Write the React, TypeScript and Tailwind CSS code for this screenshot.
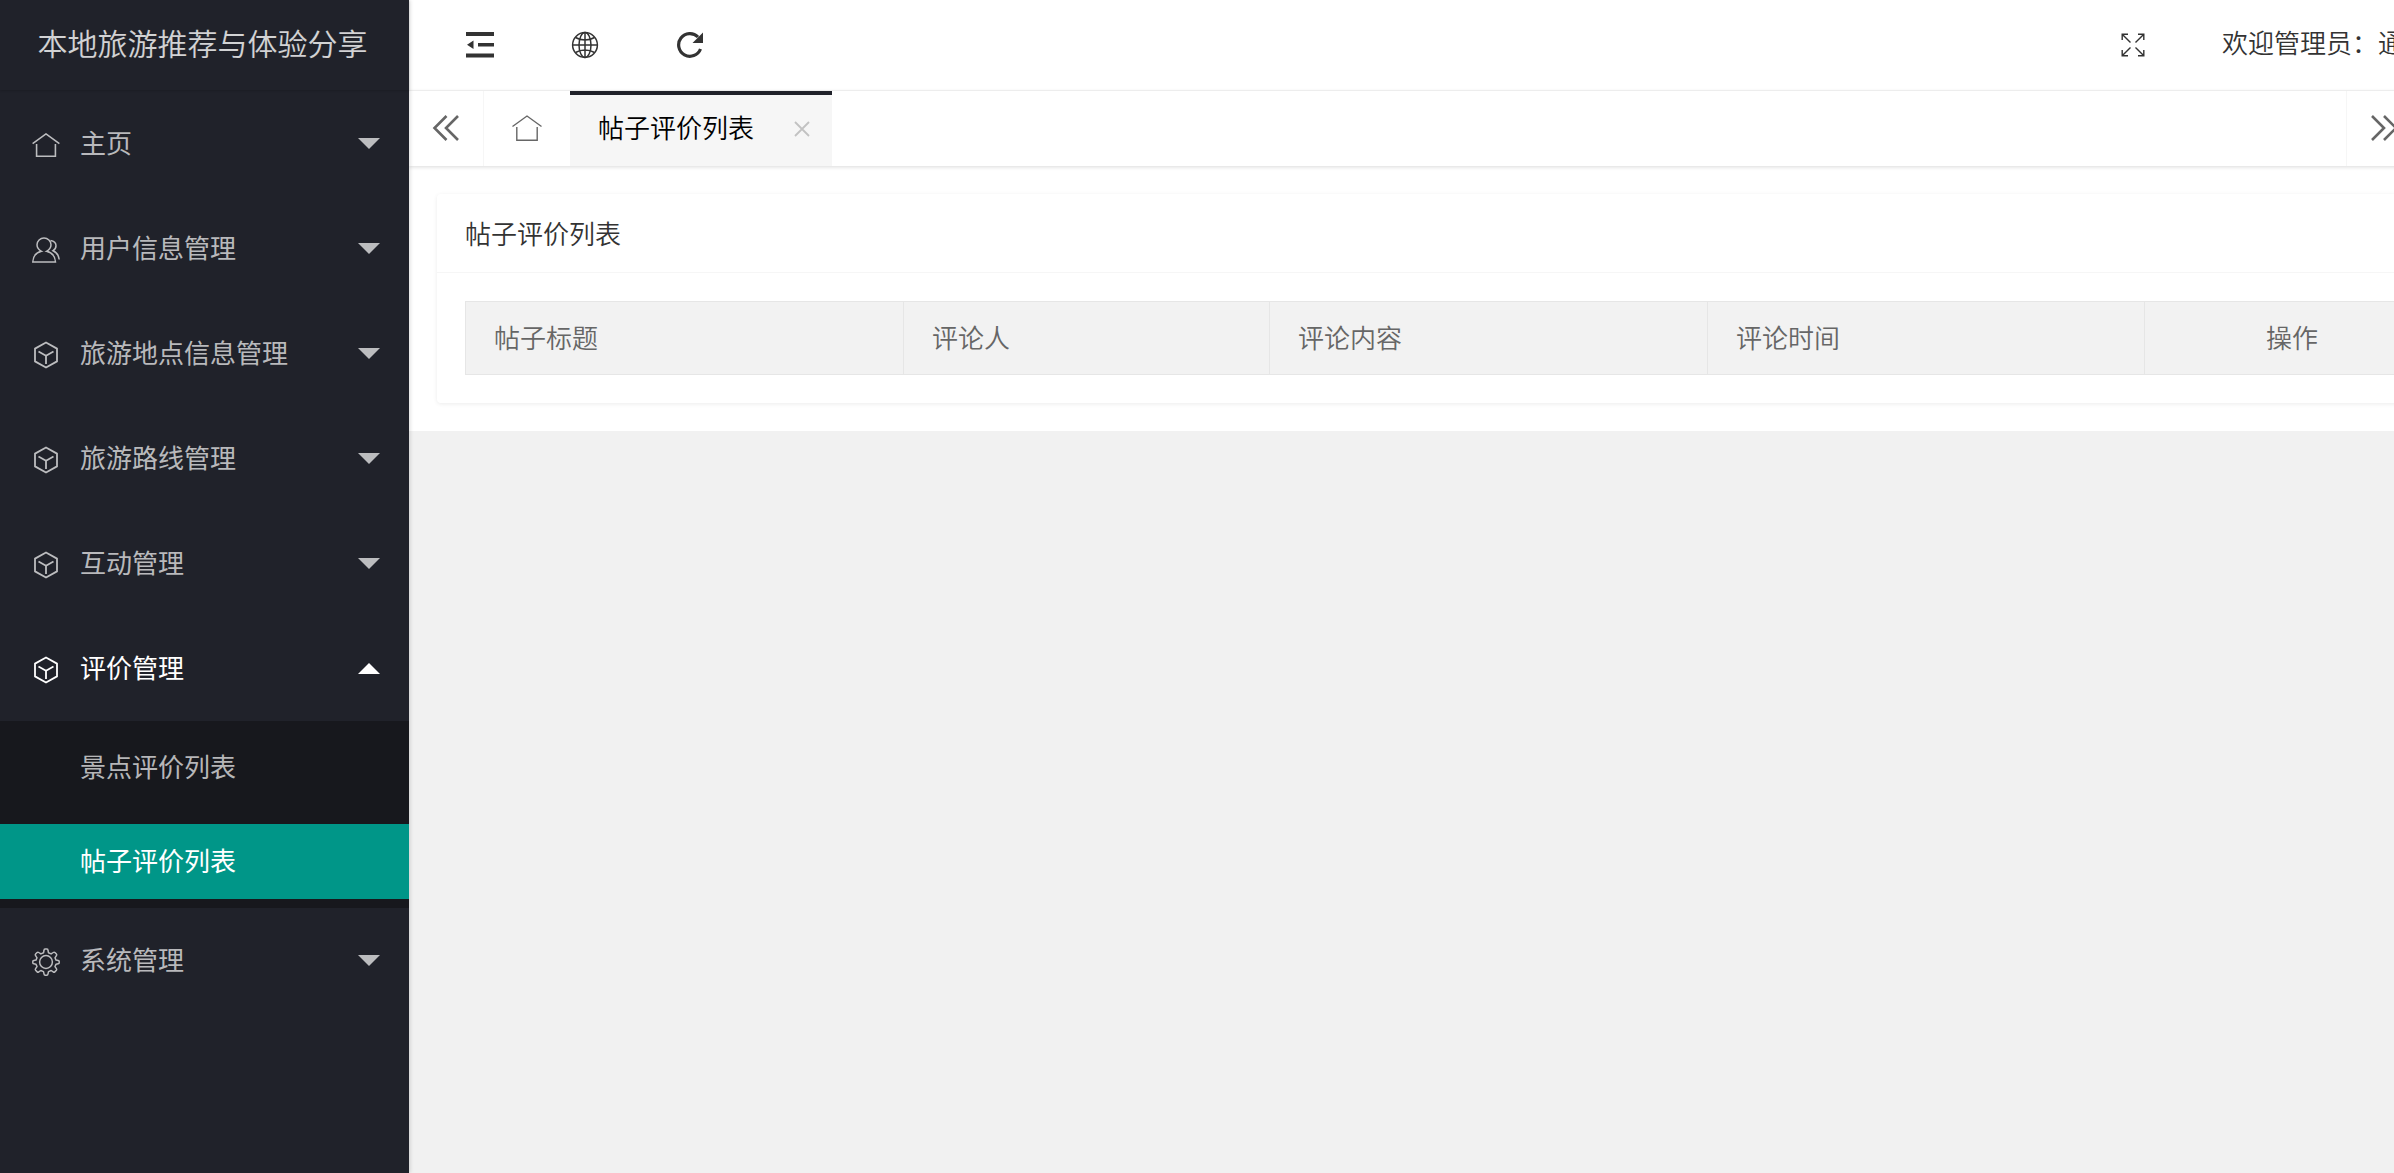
import type { ReactNode } from "react";

type IconName = "home" | "user" | "cube" | "gear";

interface MenuItem {
  label: string;
  icon: IconName;
  open?: boolean;
  children?: { label: string; active?: boolean }[];
}

const MENU: MenuItem[] = [
  { label: "主页", icon: "home" },
  { label: "用户信息管理", icon: "user" },
  { label: "旅游地点信息管理", icon: "cube" },
  { label: "旅游路线管理", icon: "cube" },
  { label: "互动管理", icon: "cube" },
  {
    label: "评价管理",
    icon: "cube",
    open: true,
    children: [{ label: "景点评价列表" }, { label: "帖子评价列表", active: true }],
  },
  { label: "系统管理", icon: "gear" },
];

const COLUMNS = [
  { label: "帖子标题", className: "w-[438px] text-left" },
  { label: "评论人", className: "w-[366px] text-left" },
  { label: "评论内容", className: "w-[438px] text-left" },
  { label: "评论时间", className: "w-[437px] text-left" },
  { label: "操作", className: "text-center" },
];

// ── Icons ──
function HomeIcon({ className, stroke = 1.4 }: { className: string; stroke?: number }) {
  return (
    <svg viewBox="0 0 30 26" className={className} fill="none" stroke="currentColor" strokeWidth={stroke} aria-hidden>
      <path d="M.5 11.5 15 1l14.500 10.500M4.800 12v13.200h20.400V12" />
    </svg>
  );
}

function UserIcon() {
  return (
    <svg viewBox="0 0 28 26" className="h-[26px] w-7" fill="none" stroke="currentColor" strokeWidth="1.500" aria-hidden>
      <path d="M9.500 14.300C6.500 12.700 5 10.300 5 7.800 5 4 8.200 1 12 1s7 3 7 6.800c0 2.500-1.500 4.900-4.500 6.500 5 1.200 8.700 5.200 9 10.700H.8c.2-5.500 3.700-9.500 8.700-10.700Z" />
      <path d="M18.500 3.500c3.300.4 5.500 2.500 5.500 5.300 0 2.200-1.200 3.800-3 4.900 3.500 1.600 5.800 4.700 6.200 8.800" />
    </svg>
  );
}

function CubeIcon() {
  return (
    <svg viewBox="0 0 26 28" className="h-7 w-[26px]" fill="none" stroke="currentColor" strokeWidth="1.800" strokeLinejoin="round" aria-hidden>
      <path d="M13 1.500 24 7.600v12.800l-11 6.100-11-6.100V7.600Z" />
      <path d="m5.500 10.500 7.500 4.200 7.500-4.200M13 14.700v8.300" />
    </svg>
  );
}

// eight rounded teeth around an open hub
function GearIcon() {
  return (
    <svg viewBox="0 0 28 28" className="size-7" fill="none" stroke="currentColor" strokeWidth="1.500" strokeLinejoin="round" aria-hidden>
      <circle cx="14" cy="14" r="6.400" />
      <path d="M12 2.500Q12 1 13 1h2q1 0 1 1.500l.5 2.300 2.600 1.100 2.100-1.400q1-.7 1.700 0l1.500 1.500q.7.700 0 1.700L23 9.800l1 2.300 2.200.4q1 .2 1 1v1.200q0 .9-1 1.100l-2.200.4-1 2.400 1.400 2.100q.6.900 0 1.600l-1.600 1.600q-.7.700-1.600 0l-2-1.400-2.700 1.100-.5 2.300q-.2 1.300-1.200 1.300h-1.600q-1 0-1.200-1.300l-.5-2.300-2.700-1.100-2 1.400q-.9.700-1.600 0l-1.600-1.600q-.6-.7 0-1.600L5 18.600l-1-2.400-2.200-.4q-1-.2-1-1.100v-1.200q0-.8 1-1l2.200-.4 1-2.300-1.400-2.100q-.7-1 0-1.700l1.500-1.500q.7-.7 1.700 0l2.100 1.400 2.600-1.100Z" />
    </svg>
  );
}

const ICONS: Record<IconName, ReactNode> = {
  home: <HomeIcon className="h-6 w-7" stroke={1.7} />,
  user: <UserIcon />,
  cube: <CubeIcon />,
  gear: <GearIcon />,
};

function Caret({ up }: { up?: boolean }) {
  return (
    <svg viewBox="0 0 22 11" className="h-[11px] w-[22px]" fill="currentColor" aria-hidden>
      <path d={up ? "M0 11 11 0l11 11Z" : "M0 0h22L11 11Z"} />
    </svg>
  );
}

function ShrinkIcon() {
  return (
    <svg viewBox="0 0 30 26" className="h-[26px] w-[30px]" fill="currentColor" aria-hidden>
      <path d="M1 0h28v4H1zM13 11h16v3.500H13zM1 21.500h28v4H1zM2 12.800 8.500 8.500v8.500Z" />
    </svg>
  );
}

function GlobeIcon() {
  return (
    <svg viewBox="0 0 28 28" className="size-7" fill="none" stroke="currentColor" strokeWidth="1.500" aria-hidden>
      <circle cx="14" cy="14" r="12.400" />
      <ellipse cx="14" cy="14" rx="6" ry="12.400" />
      <path d="M14 1.600v24.800M1.600 14h24.800M4.500 6.500c5.500 3.200 13.500 3.200 19 0M4.500 21.500c5.500-3.200 13.500-3.200 19 0" />
    </svg>
  );
}

function RefreshIcon() {
  return (
    <svg viewBox="0 0 28 28" className="size-7" aria-hidden>
      <path d="M24.500 18A11.300 11.300 0 1 1 22 6" fill="none" stroke="currentColor" strokeWidth="3.200" />
      <path d="M27 1.500V12H16.500Z" fill="currentColor" />
    </svg>
  );
}

function ExpandIcon() {
  return (
    <svg viewBox="0 0 24 24" className="size-6" fill="none" stroke="currentColor" strokeWidth="1.400" aria-hidden>
      <path d="M1.200 7V1.200H7M1.200 1.200l8.300 8.300M17 1.200h5.800V7M22.800 1.200l-8.300 8.300M1.200 17v5.800H7M1.200 22.800l8.300-8.300M17 22.800h5.800V17M22.800 22.800l-8.300-8.300" />
    </svg>
  );
}

function DoubleChevron({ right }: { right?: boolean }) {
  return (
    <svg viewBox="0 0 28 26" className="h-[26px] w-7" fill="none" stroke="currentColor" strokeWidth="2.600" aria-hidden>
      <path d={right ? "m2 1 12 12L2 25M14 1l12 12-12 12" : "M14.500 1l-12 12 12 12M26 1 14 13l12 12"} />
    </svg>
  );
}

// ── Sidebar ──
function Sidebar() {
  return (
    <aside className="z-10 w-[409px] shrink-0 bg-[#20222a] text-[26px] text-white/70 shadow-[1px_0_4px_rgba(0,0,0,0.15)]">
      <h1 className="flex h-[90px] items-center justify-center pr-1 pb-1.5 text-3xl font-[350] text-white/80 shadow-[0_1px_2px_rgba(0,0,0,0.15)]">
        本地旅游推荐与体验分享
      </h1>
      <nav className="pt-px">
        {MENU.map((item) => (
          <div key={item.label}>
            <button
              type="button"
              aria-expanded={!!item.open}
              className={`flex h-[105px] w-full items-center pr-[29px] pl-8 ${item.open ? "text-white" : ""}`}
            >
              <span className="flex w-7 justify-center pt-0.5">{ICONS[item.icon]}</span>
              <span className="ml-5 pb-1">{item.label}</span>
              <span className="ml-auto">
                <Caret up={item.open} />
              </span>
            </button>
            {item.children && (
              <ul className="flex flex-col gap-px bg-[#17181d]">
                {item.children.map((child) => (
                  <li key={child.label} className="py-[9px]">
                    <a
                      href="#"
                      className={`flex h-[75px] items-center pb-1 pl-20 ${child.active ? "bg-[#009688] text-white" : ""}`}
                    >
                      {child.label}
                    </a>
                  </li>
                ))}
              </ul>
            )}
          </div>
        ))}
      </nav>
    </aside>
  );
}

function HeaderButton({ label, children }: { label: string; children: ReactNode }) {
  return (
    <button type="button" aria-label={label} className="flex w-[105px] items-center justify-center">
      {children}
    </button>
  );
}

function Header() {
  return (
    <header className="flex h-[91px] border-b border-[#f6f6f6] bg-white pl-[18px] text-[#333]">
      <HeaderButton label="侧边伸缩"><ShrinkIcon /></HeaderButton>
      <HeaderButton label="前台"><GlobeIcon /></HeaderButton>
      <HeaderButton label="刷新"><RefreshIcon /></HeaderButton>
      <div className="ml-auto flex">
        <HeaderButton label="全屏"><ExpandIcon /></HeaderButton>
        <a href="#" className="flex w-[311px] items-center pb-1.5 pl-[37px] font-[350] whitespace-nowrap">
          欢迎管理员：通
        </a>
      </div>
    </header>
  );
}

function TabBar() {
  return (
    <div className="relative flex h-[75px] bg-white text-[#666] shadow-[0_1px_4px_rgba(0,0,0,0.15)]">
      <button type="button" aria-label="向左" className="flex w-[75px] items-center justify-center border-r border-[#f6f6f6] pb-0.5">
        <DoubleChevron />
      </button>
      <button type="button" aria-label="主页" className="flex w-[86px] items-center justify-center pb-0.5">
        <HomeIcon className="h-[26px] w-[30px]" />
      </button>
      <div className="flex w-[262px] items-center border-t-4 border-[#20222a] bg-[#f6f6f6] pb-2 pl-7 font-[350] text-black">
        帖子评价列表
        <button type="button" aria-label="关闭" className="mr-[21px] ml-auto pt-1 text-[#c2c2c2]">
          <svg viewBox="0 0 18 18" className="size-[18px]" fill="none" stroke="currentColor" strokeWidth="1.800" aria-hidden>
            <path d="m2 2 14 14M16 2 2 16" />
          </svg>
        </button>
      </div>
      <button type="button" aria-label="向右" className="ml-auto flex w-[75px] items-center justify-center border-l border-[#f6f6f6] pb-0.5">
        <DoubleChevron right />
      </button>
      <div className="w-[75px] border-l border-[#f6f6f6]" />
    </div>
  );
}

function ReviewTable() {
  return (
    <table className="w-full table-fixed border-collapse border border-[#e6e6e6] bg-[#f2f2f2] text-[#666]">
      <thead>
        <tr className="h-[73px]">
          {COLUMNS.map((col) => (
            <th key={col.label} className={`border border-[#e6e6e6] px-7 pb-0.5 font-[350] ${col.className}`}>
              {col.label}
            </th>
          ))}
        </tr>
      </thead>
    </table>
  );
}

export default function App() {
  return (
    <div className="min-h-screen overflow-hidden bg-[#f1f1f1] font-['Noto_Sans_CJK_SC',sans-serif] text-[26px] leading-9">
      {/* the console runs slightly wider than the window and is clipped on the right */}
      <div className="flex min-h-screen w-[calc(100%+102px)]">
        <Sidebar />
        <div className="min-w-0 flex-1">
          <Header />
          <TabBar />
          <main className="bg-white p-7">
            <section className="rounded-sm bg-white shadow-[0_1px_4px_rgba(0,0,0,0.08)]">
              <h2 className="flex h-[79px] items-center border-b border-[#f6f6f6] px-7 font-[350] text-[#333]">
                帖子评价列表
              </h2>
              <div className="p-7">
                <ReviewTable />
              </div>
            </section>
          </main>
        </div>
      </div>
    </div>
  );
}
